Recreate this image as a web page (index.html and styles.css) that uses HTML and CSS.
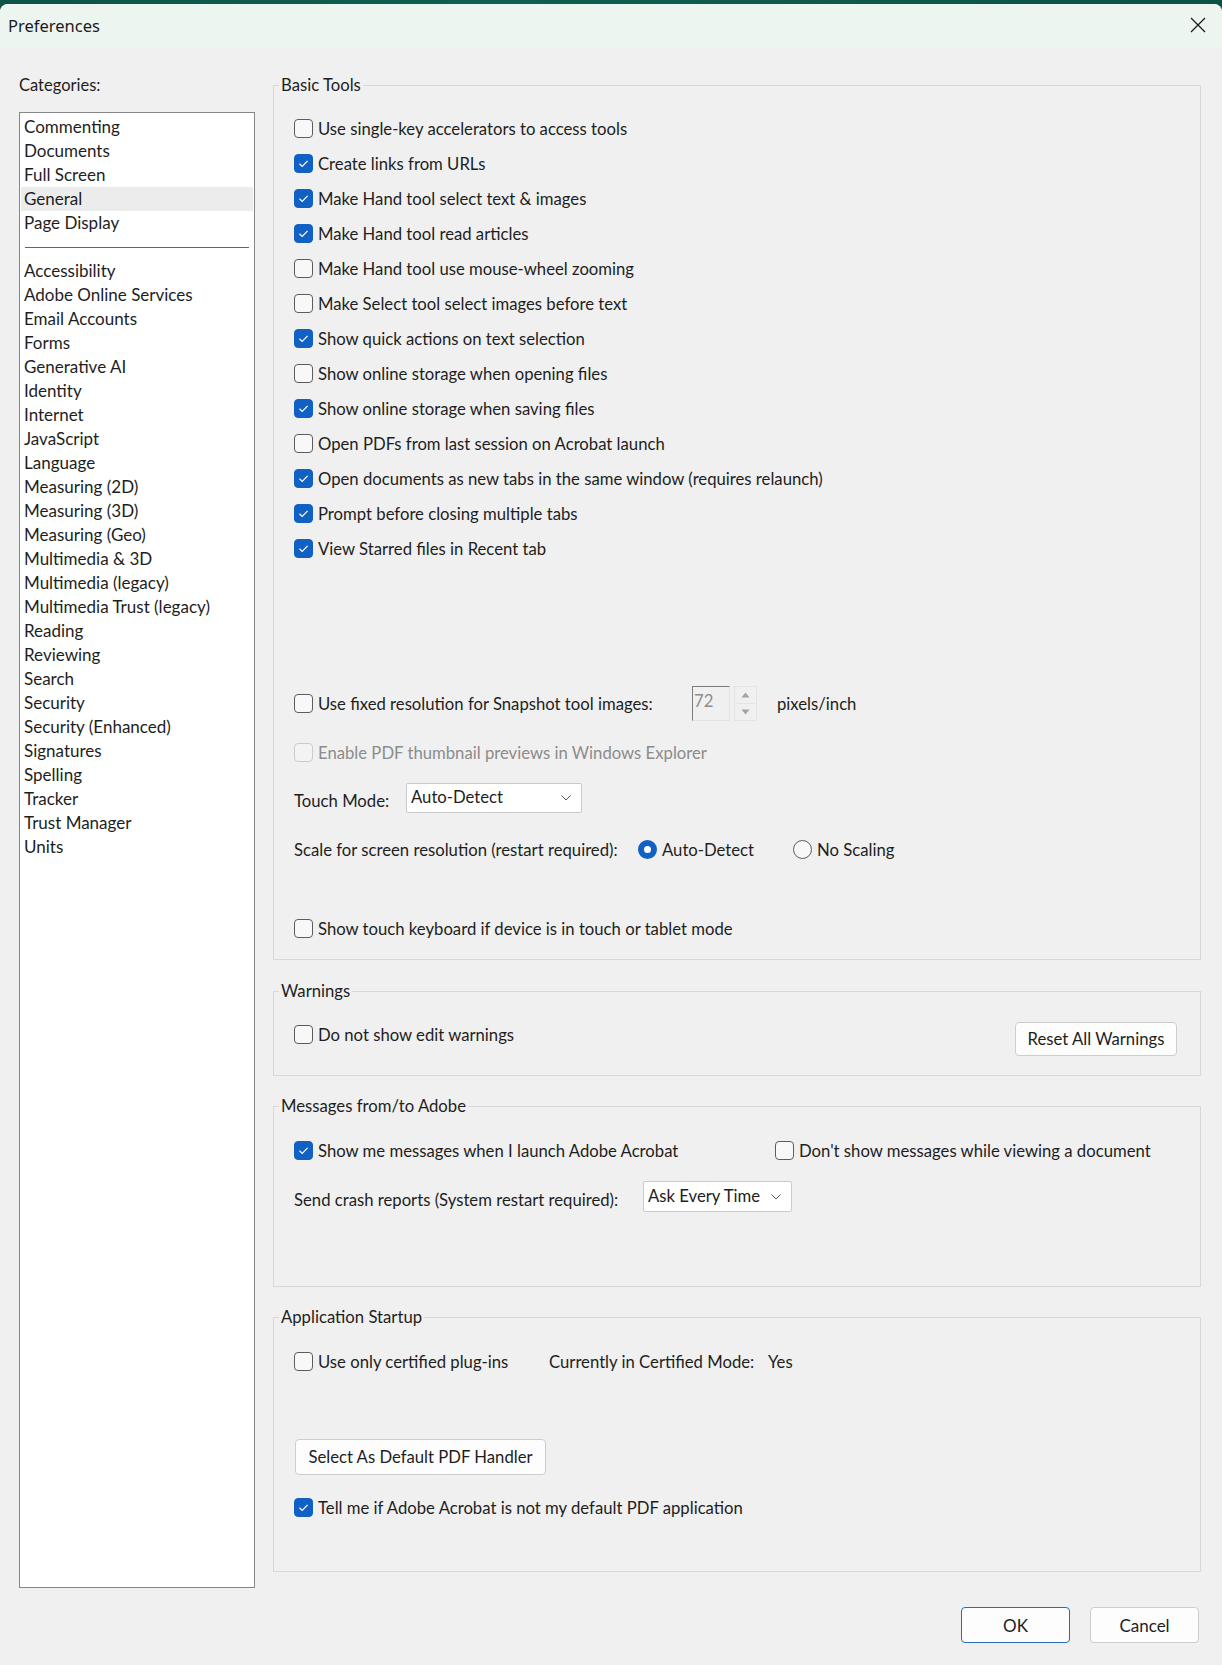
FILE: index.html
```html
<!DOCTYPE html>
<html lang="en">
<head>
<meta charset="utf-8">
<title>Preferences</title>
<link rel="stylesheet" href="styles.css">
</head>
<body>
<div class="window">
  <div class="titlebar">
    <span class="title">Preferences</span>
    <svg class="close" width="16" height="16" viewBox="0 0 16 16"><path d="M1 1L15 15M15 1L1 15" stroke="#1c1c1c" stroke-width="1.3" fill="none"/></svg>
  </div>

  <div class="main">
    <div class="left">
      <div class="cat-label">Categories:</div>
      <ul class="catlist">
        <li>Commenting</li>
        <li>Documents</li>
        <li>Full Screen</li>
        <li class="sel">General</li>
        <li>Page Display</li>
        <li class="sep"></li>
        <li>Accessibility</li>
        <li>Adobe Online Services</li>
        <li>Email Accounts</li>
        <li>Forms</li>
        <li>Generative AI</li>
        <li>Identity</li>
        <li>Internet</li>
        <li>JavaScript</li>
        <li>Language</li>
        <li>Measuring (2D)</li>
        <li>Measuring (3D)</li>
        <li>Measuring (Geo)</li>
        <li>Multimedia &amp; 3D</li>
        <li>Multimedia (legacy)</li>
        <li>Multimedia Trust (legacy)</li>
        <li>Reading</li>
        <li>Reviewing</li>
        <li>Search</li>
        <li>Security</li>
        <li>Security (Enhanced)</li>
        <li>Signatures</li>
        <li>Spelling</li>
        <li>Tracker</li>
        <li>Trust Manager</li>
        <li>Units</li>
      </ul>
    </div>

    <div class="right">
      <fieldset class="group">
        <legend>Basic Tools</legend>
        <div class="body basic">
          <div class="row"><span class="box"></span><span>Use single-key accelerators to access tools</span></div>
          <div class="row"><span class="box on"><svg viewBox="0 0 19 19"><path d="M5.5 9.8L8.2 12.4L13.6 6.8"/></svg></span><span>Create links from URLs</span></div>
          <div class="row"><span class="box on"><svg viewBox="0 0 19 19"><path d="M5.5 9.8L8.2 12.4L13.6 6.8"/></svg></span><span>Make Hand tool select text &amp; images</span></div>
          <div class="row"><span class="box on"><svg viewBox="0 0 19 19"><path d="M5.5 9.8L8.2 12.4L13.6 6.8"/></svg></span><span>Make Hand tool read articles</span></div>
          <div class="row"><span class="box"></span><span>Make Hand tool use mouse-wheel zooming</span></div>
          <div class="row"><span class="box"></span><span>Make Select tool select images before text</span></div>
          <div class="row"><span class="box on"><svg viewBox="0 0 19 19"><path d="M5.5 9.8L8.2 12.4L13.6 6.8"/></svg></span><span>Show quick actions on text selection</span></div>
          <div class="row"><span class="box"></span><span>Show online storage when opening files</span></div>
          <div class="row"><span class="box on"><svg viewBox="0 0 19 19"><path d="M5.5 9.8L8.2 12.4L13.6 6.8"/></svg></span><span>Show online storage when saving files</span></div>
          <div class="row"><span class="box"></span><span>Open PDFs from last session on Acrobat launch</span></div>
          <div class="row"><span class="box on"><svg viewBox="0 0 19 19"><path d="M5.5 9.8L8.2 12.4L13.6 6.8"/></svg></span><span>Open documents as new tabs in the same window (requires relaunch)</span></div>
          <div class="row"><span class="box on"><svg viewBox="0 0 19 19"><path d="M5.5 9.8L8.2 12.4L13.6 6.8"/></svg></span><span>Prompt before closing multiple tabs</span></div>
          <div class="row"><span class="box on"><svg viewBox="0 0 19 19"><path d="M5.5 9.8L8.2 12.4L13.6 6.8"/></svg></span><span>View Starred files in Recent tab</span></div>

          <div class="row fixed">
            <div class="cb-fixed"><span class="box"></span><span>Use fixed resolution for Snapshot tool images:</span></div>
            <div class="spin-input">72</div>
            <div class="spin-arrows">
              <div class="arrow"><svg width="9" height="6" viewBox="0 0 9 6"><path d="M0.5 5.5L4.5 0.5L8.5 5.5Z" fill="#a3a3a3"/></svg></div>
              <div class="arrow"><svg width="9" height="6" viewBox="0 0 9 6"><path d="M0.5 0.5L4.5 5.5L8.5 0.5Z" fill="#a3a3a3"/></svg></div>
            </div>
            <span class="unit">pixels/inch</span>
          </div>

          <div class="row thumb disabled"><span class="box"></span><span>Enable PDF thumbnail previews in Windows Explorer</span></div>

          <div class="row touch">
            <span class="lbl touch-lbl">Touch Mode:</span>
            <div class="select touch-sel"><span>Auto-Detect</span><svg width="10" height="6" viewBox="0 0 10 6"><path d="M0.5 0.5L5 5L9.5 0.5" stroke="#555" stroke-width="1" fill="none"/></svg></div>
          </div>

          <div class="row scale">
            <span class="scale-lbl">Scale for screen resolution (restart required):</span>
            <div class="radio-item"><span class="radio on"></span><span>Auto-Detect</span></div>
            <div class="radio-item"><span class="radio"></span><span>No Scaling</span></div>
          </div>

          <div class="row kbd"><span class="box"></span><span>Show touch keyboard if device is in touch or tablet mode</span></div>
        </div>
      </fieldset>

      <fieldset class="group warnings">
        <legend>Warnings</legend>
        <div class="body warn-body">
          <div class="row"><span class="box"></span><span>Do not show edit warnings</span></div>
          <button class="btn reset">Reset All Warnings</button>
        </div>
      </fieldset>

      <fieldset class="group messages">
        <legend>Messages from/to Adobe</legend>
        <div class="body msg-body">
          <div class="row">
            <div class="msg-first"><span class="box on"><svg viewBox="0 0 19 19"><path d="M5.5 9.8L8.2 12.4L13.6 6.8"/></svg></span><span>Show me messages when I launch Adobe Acrobat</span></div>
            <div class="cb-inline"><span class="box"></span><span>Don't show messages while viewing a document</span></div>
          </div>
          <div class="row crash">
            <span class="lbl crash-lbl">Send crash reports (System restart required):</span>
            <div class="select crash-sel"><span>Ask Every Time</span><svg width="10" height="6" viewBox="0 0 10 6"><path d="M0.5 0.5L5 5L9.5 0.5" stroke="#555" stroke-width="1" fill="none"/></svg></div>
          </div>
        </div>
      </fieldset>

      <fieldset class="group startup">
        <legend>Application Startup</legend>
        <div class="body start-body">
          <div class="row">
            <div class="cert-first"><span class="box"></span><span>Use only certified plug-ins</span></div>
            <span class="cert-mode">Currently in Certified Mode:</span>
            <span>Yes</span>
          </div>
          <button class="btn handler">Select As Default PDF Handler</button>
          <div class="row tell"><span class="box on"><svg viewBox="0 0 19 19"><path d="M5.5 9.8L8.2 12.4L13.6 6.8"/></svg></span><span>Tell me if Adobe Acrobat is not my default PDF application</span></div>
        </div>
      </fieldset>
    </div>
  </div>

  <div class="footer">
    <button class="btn ok">OK</button>
    <button class="btn cancel">Cancel</button>
  </div>
</div>
</body>
</html>
```
FILE: styles.css
```css
* { box-sizing: border-box; }
html, body { margin: 0; padding: 0; }
body {
  width: 1222px;
  height: 1665px;
  overflow: hidden;
  background: linear-gradient(90deg, #0d5446 0%, #0f6050 40%, #0c5244 100%);
  font-family: "Lato", "Noto Sans", sans-serif;
  font-size: 17px;
  color: #1e1e1e;
}
.window {
  margin-top: 4px;
  height: 1661px;
  background: #f0f0f0;
  border-radius: 8px 8px 0 0;
  overflow: hidden;
}
.titlebar {
  height: 44px;
  background: #edf5f1;
  display: flex;
  align-items: center;
  justify-content: space-between;
  padding: 0 16px 2px 8px;
}
.title {
  font-family: "Noto Sans", sans-serif;
  font-size: 16.5px;
  color: #1a1a1a;
}
.close { display: block; }

.main {
  display: grid;
  grid-template-columns: 236px 928px;
  column-gap: 18px;
  padding: 27px 0 0 19px;
}
.cat-label { height: 20px; line-height: 20px; font-size: 16.5px; }
.catlist {
  list-style: none;
  margin: 17px 0 0;
  padding: 2px 1px 1px;
  height: 1476px;
  background: #fff;
  border: 1px solid #868686;
}
.catlist li {
  height: 24px;
  line-height: 24px;
  padding-left: 3px;
  white-space: nowrap;
}
.catlist li.sel { background: #ececec; }
.catlist li.sep {
  height: 1px;
  margin: 12px 4px 11px;
  background: #2b72b6;
}

.right { font-size: 16.7px; }
.group {
  margin: 0;
  padding: 0;
  border: 1px solid #d8d8d8;
  min-width: 0;
}
.group legend {
  margin-left: 5px;
  padding: 0 2px;
  line-height: 20px;
}
.warnings { margin-top: 21px; }
.messages, .startup { margin-top: 20px; }

.body { padding: 16px 22px 13px 20px; }
.row {
  display: flex;
  align-items: center;
  height: 35px;
  white-space: nowrap;
}
.box {
  flex: none;
  width: 19px;
  height: 19px;
  margin-right: 5px;
  border: 1px solid #5c5c5c;
  border-radius: 4px;
  background: #f8f8f8;
  display: inline-block;
}
.box.on {
  background: #1161c5;
  border-color: #1161c5;
}
.box.on svg {
  display: block;
  width: 19px;
  height: 19px;
  transform: translate(-1px, -1px);
  overflow: visible;
}
.box.on svg path {
  stroke: #fff;
  stroke-width: 1.2;
  fill: none;
}

.fixed { margin-top: 120px; }
.cb-fixed { display: flex; align-items: center; width: 398px; }
.spin-input {
  width: 38px;
  height: 35px;
  border-top: 1px solid #7c7c7c;
  border-left: 1px solid #7c7c7c;
  border-right: 1px solid #e2e2e2;
  border-bottom: 1px solid #e2e2e2;
  background: #f0f0f0;
  color: #8d8d8d;
  padding: 3px 0 0 1px;
  line-height: 22px;
  align-self: flex-start;
}
.spin-arrows {
  margin-left: 4px;
  width: 23px;
  height: 35px;
  display: flex;
  flex-direction: column;
  border: 1px solid #e4e4e4;
}
.arrow {
  flex: 1;
  display: flex;
  align-items: center;
  justify-content: center;
}
.arrow + .arrow { border-top: 1px solid #e4e4e4; }
.arrow svg { display: block; }
.unit { margin-left: 20px; }

.thumb { margin-top: 14px; }
.disabled { color: #8c8c8c; }
.disabled .box { border-color: #cbcbcb; background: #f3f3f3; }

.touch { margin-top: 13px; height: 30px; }
.lbl { padding-top: 6px; }
.touch-lbl { width: 112px; }
.select {
  height: 30px;
  background: #fff;
  border: 1px solid #cacaca;
  border-radius: 2px;
  display: flex;
  align-items: center;
  justify-content: space-between;
  padding: 0 10px 2px 4px;
}
.select svg { display: block; margin-top: 2px; }
.touch-sel { width: 176px; }

.scale { margin-top: 19px; }
.scale-lbl { width: 344px; }
.radio-item { display: flex; align-items: center; width: 155px; }
.radio {
  flex: none;
  width: 19px;
  height: 19px;
  margin-right: 5px;
  border-radius: 50%;
  border: 1px solid #5c5c5c;
  background: #f8f8f8;
}
.radio.on {
  border: 6px solid #1161c5;
  background: #fff;
}

.kbd { margin-top: 44px; }

.btn {
  font: inherit;
  color: #1e1e1e;
  background: #fdfdfd;
  border: 1px solid #cdcdcd;
  border-radius: 4px;
  padding: 0;
  text-align: center;
}

.warn-body {
  display: flex;
  justify-content: space-between;
  align-items: flex-start;
  padding: 16px 23px 19px 20px;
}
.reset { margin-top: 5px; width: 162px; height: 34px; }

.msg-body { padding: 17px 22px 74px 20px; }
.msg-first { display: flex; align-items: center; width: 481px; }
.cb-inline { display: flex; align-items: center; }
.crash { margin-top: 13px; height: 31px; }
.crash-lbl { width: 349px; }
.crash-sel { width: 149px; height: 31px; }

.start-body { padding: 17px 22px 46px 20px; }
.cert-first { display: flex; align-items: center; width: 255px; }
.cert-mode { width: 219px; }
.handler {
  display: block;
  margin: 60px 0 0 1px;
  width: 251px;
  height: 36px;
}
.tell { margin-top: 15px; }

.footer {
  display: flex;
  justify-content: flex-end;
  gap: 20px;
  padding: 19px 23px 0 0;
  font-size: 17px;
}
.ok, .cancel { width: 109px; height: 36px; }
.ok { border-color: #2a6cb0; }
```
